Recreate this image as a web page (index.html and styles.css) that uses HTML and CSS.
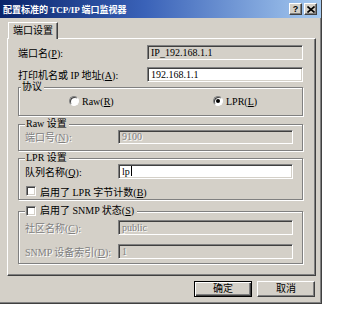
FILE: index.html
```html
<!DOCTYPE html>
<html lang="zh-CN">

<head>
    <meta charset="UTF-8">
    <title>配置标准的 TCP/IP 端口监视器</title>
    <link rel="stylesheet" href="styles.css">
</head>

<body>
    <div class="dialog">
        <div class="titlebar">
            <span class="title">配置标准的 TCP/IP 端口监视器</span>
            <div class="caption-buttons">
                <span class="cap-btn help">?</span>
                <span class="cap-btn">
                    <svg width="8" height="7" viewBox="0 0 8 7">
                        <path d="M0.5 0.5 L7.5 6.5 M7.5 0.5 L0.5 6.5" stroke="#000" stroke-width="1.6" fill="none"/>
                    </svg>
                </span>
            </div>
        </div>

        <div class="dialog-body">
            <div class="tabs">
                <span class="tab">端口设置</span>
            </div>

            <div class="panel">
                <div class="row">
                    <span class="label">端口名(<u>P</u>):</span>
                    <div class="field readonly">IP_192.168.1.1</div>
                </div>
                <div class="row row-gap">
                    <span class="label">打印机名或 IP 地址(<u>A</u>):</span>
                    <div class="field">192.168.1.1</div>
                </div>

                <div class="group group-protocol">
                    <div class="group-title">协议</div>
                    <div class="radio-row">
                        <div class="radio-item">
                            <span class="radio"></span>
                            <span>Raw(<u>R</u>)</span>
                        </div>
                        <div class="radio-item">
                            <span class="radio checked"><span class="dot"></span></span>
                            <span>LPR(<u>L</u>)</span>
                        </div>
                    </div>
                </div>

                <div class="group group-raw">
                    <div class="group-title">Raw 设置</div>
                    <div class="group-row short">
                        <span class="sub-label disabled">端口号(<u>N</u>):</span>
                        <div class="field disabled">9100</div>
                    </div>
                </div>

                <div class="group group-lpr">
                    <div class="group-title">LPR 设置</div>
                    <div class="group-row first">
                        <span class="sub-label">队列名称(<u>Q</u>):</span>
                        <div class="field">lp<span class="caret"></span></div>
                    </div>
                    <div class="check-row">
                        <span class="checkbox"></span>
                        <span>启用了 LPR 字节计数(<u>B</u>)</span>
                    </div>
                </div>

                <div class="group group-snmp">
                    <div class="group-title check-title">
                        <span class="checkbox"></span>
                        <span>启用了 SNMP 状态(<u>S</u>)</span>
                    </div>
                    <div class="group-row first">
                        <span class="sub-label disabled">社区名称(<u>C</u>):</span>
                        <div class="field disabled">public</div>
                    </div>
                    <div class="group-row second">
                        <span class="sub-label disabled">SNMP 设备索引(<u>D</u>):</span>
                        <div class="field disabled">1</div>
                    </div>
                </div>
            </div>

            <div class="actions">
                <button class="btn default">确定</button>
                <button class="btn">取消</button>
            </div>
        </div>
    </div>
</body>

</html>
```

FILE: styles.css
```css
body {
    margin: 0;
    background-color: #fff;
    font-family: "Liberation Serif", "Noto Sans CJK SC", serif;
    font-size: 10px;
    color: #000;
}

.dialog {
    width: 322px;
    height: 304px;
    box-sizing: border-box;
    background-color: #d4d0c8;
    border-right: 1px solid #404040;
    border-bottom: 1px solid #404040;
    box-shadow: inset -1px -1px #808080;
}

/* title bar */
.titlebar {
    height: 18px;
    display: flex;
    align-items: center;
    justify-content: space-between;
    padding: 0 4px 0 3px;
    background: linear-gradient(to right, #0a246a, #3a62b8 45%, #a6caf0);
}

.title {
    color: #fff;
    font-weight: bold;
    font-size: 9px;
    white-space: nowrap;
}

.caption-buttons {
    display: flex;
    gap: 2px;
}

.cap-btn {
    width: 13px;
    height: 12px;
    box-sizing: border-box;
    display: flex;
    align-items: center;
    justify-content: center;
    background-color: #d4d0c8;
    border: 1px solid;
    border-color: #fff #404040 #404040 #fff;
    box-shadow: inset -1px -1px #808080;
}

.cap-btn.help {
    font-family: "Liberation Sans", sans-serif;
    font-weight: bold;
    font-size: 9px;
    line-height: 9px;
}

/* body + tab */
.dialog-body {
    padding: 4px 5px 0 7px;
}

.tabs {
    height: 16px;
    display: flex;
}

.tab {
    position: relative;
    z-index: 1;
    height: 17px;
    box-sizing: border-box;
    margin-left: 1px;
    padding: 0 4px;
    line-height: 15px;
    background-color: #d4d0c8;
    border-top: 1px solid #fff;
    border-left: 1px solid #fff;
    border-right: 1px solid #404040;
    box-shadow: inset -1px 0 #808080;
}

.panel {
    height: 238px;
    box-sizing: border-box;
    padding: 6px 12px 0 10px;
    border-top: 1px solid #fff;
    border-left: 1px solid #fff;
    border-right: 1px solid #404040;
    border-bottom: 1px solid #404040;
    box-shadow: inset -1px -1px #808080;
}

.row {
    display: flex;
    align-items: center;
    height: 15px;
}

.row-gap {
    margin-top: 7px;
}

.label {
    width: 129px;
    flex-shrink: 0;
    white-space: nowrap;
}

.field {
    flex: 1;
    height: 15px;
    box-sizing: border-box;
    padding: 0 3px;
    line-height: 13px;
    white-space: nowrap;
    background-color: #fff;
    border: 1px solid;
    border-color: #808080 #fff #fff #808080;
    box-shadow: inset 1px 1px #404040, inset -1px -1px #d4d0c8;
}

.field.readonly {
    background-color: #d4d0c8;
}

.field.disabled {
    background-color: #d4d0c8;
    color: #808080;
    text-shadow: 1px 1px #fff;
}

.disabled {
    color: #808080;
    text-shadow: 1px 1px #fff;
}

.caret {
    display: inline-block;
    width: 1px;
    height: 10px;
    margin-left: 1px;
    vertical-align: -1px;
    background-color: #000;
}

/* group boxes */
.group {
    padding: 0 9px 0 6px;
    border: 1px solid #808080;
    box-shadow: inset 1px 1px #fff, 1px 1px #fff;
}

.group-title {
    width: fit-content;
    height: 10px;
    line-height: 10px;
    margin-top: -6px;
    margin-left: -4px;
    padding: 0 2px 0 1px;
    background-color: #d4d0c8;
    white-space: nowrap;
}

.group-protocol {
    margin-top: 5px;
    padding-bottom: 8px;
}

.group-raw {
    margin-top: 8px;
    padding-bottom: 6px;
}

.group-lpr {
    margin-top: 7px;
    padding-bottom: 2px;
}

.group-snmp {
    margin-top: 11px;
    padding-bottom: 4px;
}

.group-raw .group-title,
.group-lpr .group-title {
    margin-left: 0;
}

.radio-row {
    display: flex;
    align-items: center;
    height: 12px;
    margin-top: 3px;
    padding-left: 44px;
}

.radio-item {
    display: flex;
    align-items: center;
    gap: 3px;
    white-space: nowrap;
}

.radio-item:first-child {
    width: 144px;
}

.radio {
    width: 10px;
    height: 10px;
    box-sizing: border-box;
    display: flex;
    align-items: center;
    justify-content: center;
    border-radius: 50%;
    background-color: #fff;
    border: 1px solid;
    border-color: #808080 #fff #fff #808080;
    box-shadow: inset 1px 1px #404040;
}

.dot {
    width: 4px;
    height: 4px;
    border-radius: 50%;
    background-color: #000;
}

.group-row {
    display: flex;
    align-items: center;
}

.group-row.short .field {
    height: 14px;
    line-height: 12px;
}

.group-row.first {
    margin-top: 1px;
}

.group-snmp .group-row.first {
    margin-top: 3px;
}

.group-row.second {
    margin-top: 9px;
}

.sub-label {
    width: 93px;
    flex-shrink: 0;
    white-space: nowrap;
}

.check-row,
.check-title {
    display: flex;
    align-items: center;
    gap: 4px;
    white-space: nowrap;
}

.check-row {
    height: 12px;
    margin-top: 6px;
    padding-left: 1px;
}

.group-snmp .check-title {
    height: 12px;
    margin-top: -7px;
    margin-left: 0;
    padding: 0 3px 0 1px;
    line-height: 12px;
}

.checkbox {
    width: 10px;
    height: 10px;
    box-sizing: border-box;
    flex-shrink: 0;
    background-color: #fff;
    border: 1px solid;
    border-color: #808080 #fff #fff #808080;
    box-shadow: inset 1px 1px #404040, inset -1px -1px #d4d0c8;
}

/* bottom buttons */
.actions {
    display: flex;
    justify-content: flex-end;
    gap: 5px;
    margin-top: 5px;
    padding-right: 1px;
}

.btn {
    width: 58px;
    height: 16px;
    box-sizing: border-box;
    padding: 0;
    font-family: "Liberation Serif", "Noto Sans CJK SC", serif;
    font-size: 10px;
    line-height: 12px;
    color: #000;
    background-color: #d4d0c8;
    border: 1px solid;
    border-color: #fff #404040 #404040 #fff;
    box-shadow: inset -1px -1px #808080;
}

.btn.default {
    border-color: #000;
    box-shadow: inset 1px 1px #fff, inset -1px -1px #404040, inset -2px -2px #808080;
}
```
